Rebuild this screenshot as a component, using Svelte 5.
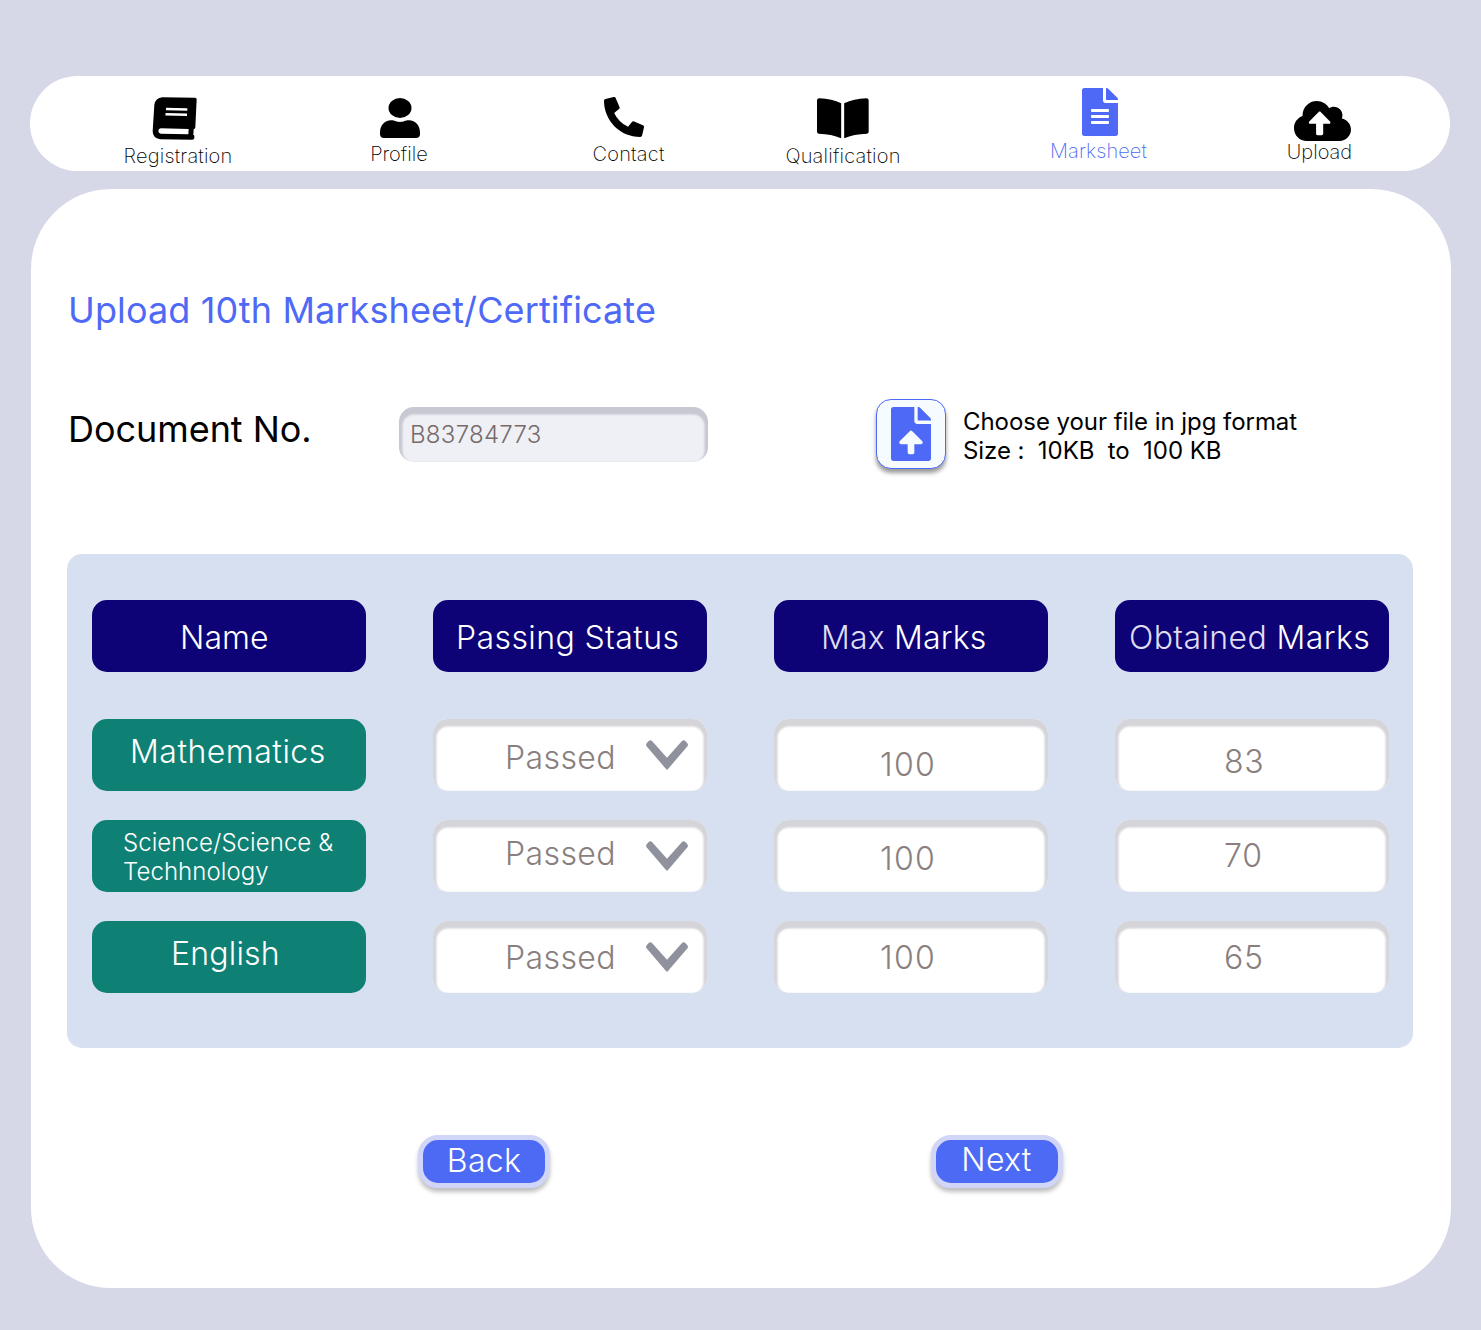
<script>
  const steps = ['Registration', 'Profile', 'Contact', 'Qualification', 'Marksheet', 'Upload'];

  const rows = [
    { key: 'maths', name: 'Mathematics', status: 'Passed', max: '100', got: '83' },
    { key: 'science', name: 'Science/Science & Techhnology', status: 'Passed', max: '100', got: '70' },
    { key: 'english', name: 'English', status: 'Passed', max: '100', got: '65' }
  ];
</script>

<div class="page">
  <nav class="steps">
    {#each steps as step}
      <div class="step {step.toLowerCase()}">
        {#if step === 'Registration'}
          <svg viewBox="395 81 135 129" width="45" height="43">
            <path fill-rule="evenodd" d="M426 81.500L524 83Q529 83 529 88L525 172Q525 176 520 178L519 194Q523 196 522 200L522 204Q521 209.500 516 209.500L419 207.500Q397 204 397 184L402 104Q405 84 426 81.500ZM437 113L501 115V122.500L437 121ZM436 129L500 130.500V138L435 136.500ZM422 175L505 177L504 193L421 191Q414 190 414 183Q414 176 422 175Z" />
          </svg>
        {:else if step === 'Profile'}
          <svg viewBox="1080 84 120 120" width="40" height="40">
            <ellipse cx="1140" cy="114" rx="34.500" ry="30" />
            <path d="M1080 188C1080 166 1094 151 1113 151C1125 151 1128 156 1140 156C1152 156 1155 151 1167 151C1186 151 1200 166 1200 188V192Q1200 204 1188 204H1092Q1080 204 1080 192Z" />
          </svg>
        {:else if step === 'Contact'}
          <svg viewBox="0 0 512 512" width="40" height="40">
            <path d="M497.390 361.800l-112-48a24 24 0 0 0-28 6.900l-49.600 60.600A370.660 370.660 0 0 1 130.600 204.110l60.600-49.600a23.940 23.940 0 0 0 6.900-28l-48-112A24.160 24.160 0 0 0 122.600.610l-104 24A24 24 0 0 0 0 48c0 256.500 207.900 464 464 464a24 24 0 0 0 23.400-18.600l24-104a24.290 24.290 0 0 0-14.010-27.600z" />
          </svg>
        {:else if step === 'Qualification'}
          <svg viewBox="771 83 156 123" width="52" height="41">
            <path d="M771 90Q771 84 778 84Q816 85 843.500 99V204Q815 191 776 190Q771 189 771 184ZM926 90Q926 84 919 84Q881 85 852.500 99V204Q881 191 921 190Q926 189 926 184Z" />
          </svg>
        {:else if step === 'Marksheet'}
          <svg viewBox="0 0 384 512" width="36" height="48">
            <path d="M224 136V0H24C10.700 0 0 10.700 0 24v464c0 13.300 10.700 24 24 24h336c13.300 0 24-10.700 24-24V160H248c-13.200 0-24-10.800-24-24zm64 236c0 6.600-5.400 12-12 12H108c-6.600 0-12-5.400-12-12v-8c0-6.600 5.400-12 12-12h168c6.600 0 12 5.400 12 12v8zm0-64c0 6.600-5.400 12-12 12H108c-6.600 0-12-5.400-12-12v-8c0-6.600 5.400-12 12-12h168c6.600 0 12 5.400 12 12v8zm0-72v8c0 6.600-5.400 12-12 12H108c-6.600 0-12-5.400-12-12v-8c0-6.600 5.400-12 12-12h168c6.600 0 12 5.400 12 12zm96-114.100v6.100H256V0h6.100c6.400 0 12.500 2.500 17 7l97.900 98c4.500 4.500 7 10.600 7 16.900z" />
          </svg>
        {:else}
          <svg viewBox="0 32 640 448" width="57" height="40">
            <path d="M537.600 226.600c4.100-10.700 6.400-22.400 6.400-34.600 0-53-43-96-96-96-19.700 0-38.100 6-53.300 16.200C367 64.200 315.300 32 256 32c-88.400 0-160 71.600-160 160 0 2.700.100 5.400.200 8.100C40.200 219.800 0 273.200 0 336c0 79.500 64.500 144 144 144h368c70.700 0 128-57.300 128-128 0-61.900-44-113.600-102.400-125.400zM393.400 288H328v112c0 8.800-7.200 16-16 16h-48c-8.800 0-16-7.200-16-16V288h-65.400c-14.300 0-21.400-17.200-11.300-27.400l105.400-105.400c6.200-6.200 16.400-6.200 22.600 0l105.400 105.400c10.100 10.200 2.900 27.400-11.300 27.400z" />
          </svg>
        {/if}
        <span>{step}</span>
      </div>
    {/each}
  </nav>

  <main class="card">
    <h1>Upload 10th Marksheet/Certificate</h1>

    <div class="document">
      <span class="label">Document No.</span>
      <div class="number">B83784773</div>
      <button class="file" aria-label="Choose file">
        <svg viewBox="0 0 384 512" width="40" height="54" preserveAspectRatio="none">
          <path d="M224 136V0H24C10.700 0 0 10.700 0 24v464c0 13.300 10.700 24 24 24h336c13.300 0 24-10.700 24-24V160H248c-13.200 0-24-10.800-24-24zm65.180 216.010H224v80c0 8.840-7.160 16-16 16h-32c-8.840 0-16-7.160-16-16v-80H94.820c-14.280 0-21.410-17.290-11.270-27.360l96.420-95.700c6.650-6.610 17.390-6.610 24.040 0l96.420 95.700c10.150 10.070 3.030 27.360-11.250 27.360zM377 105L279.100 7c-4.500-4.500-10.600-7-17-7H256v128h128v-6.100c0-6.300-2.500-12.400-7-16.900z" />
        </svg>
      </button>
      <p class="hint">Choose your file in jpg format<br />Size :&nbsp; 10KB&nbsp; to&nbsp; 100 KB</p>
    </div>

    <section class="marks">
      <div class="row head">
        <div class="cell name">Name</div>
        <div class="cell status">Passing Status</div>
        <div class="cell max"><span class="dim">Max</span> Marks</div>
        <div class="cell got"><span class="dim">Obtained</span> Marks</div>
      </div>
      {#each rows as row}
        <div class="row {row.key}">
          <div class="cell name">{row.name}</div>
          <div class="cell field status">
            <span>{row.status}</span>
            <svg class="chevron" viewBox="678 450 126 90" width="42" height="30">
              <path d="M679 468Q677 464 680 460L686 453Q691 448 696 453L741 503L786 453Q791 448 796 453L802 460Q805 464 803 468L744 537Q741 541 738 537Z" />
            </svg>
          </div>
          <div class="cell field max">{row.max}</div>
          <div class="cell field got">{row.got}</div>
        </div>
      {/each}
    </section>

    <div class="actions">
      <button class="back">Back</button>
      <button class="next">Next</button>
    </div>
  </main>
</div>

<style>
  :global(body) {
    background: #d6d8e7;
  }

  .page {
    box-sizing: border-box;
    width: 1481px;
    height: 1330px;
    padding: 76px 30px 0;
    background: #d6d8e7;
    font-family: Inter, 'Liberation Sans', sans-serif;
    color: #000;
  }

  /* step bar */
  .steps {
    box-sizing: border-box;
    display: grid;
    grid-template-columns: 220px 222px 237px 192px 319px 123px;
    width: 1420px;
    height: 95px;
    padding-left: 38px;
    border-radius: 48px;
    background: #fff;
  }

  .step {
    display: flex;
    flex-direction: column;
    align-items: center;
    font-size: 20px;
    font-weight: 200;
    line-height: 24px;
    letter-spacing: 0.2px;
  }

  .step svg {
    display: block;
    flex: none;
    fill: currentColor;
  }

  .registration { padding-top: 21px; }
  .registration svg { margin: 0 8px 4px 0; }
  .profile { padding-top: 22px; letter-spacing: 0; }
  .profile svg { margin: 0 0 4px 2px; }
  .contact { padding-top: 21px; }
  .contact svg { margin: 0 9px 5px 0; }
  .qualification { padding-top: 22px; }
  .qualification svg { margin-bottom: 5px; }
  .marksheet { padding-top: 12px; color: #4d69f5; letter-spacing: 0.1px; }
  .marksheet svg { margin: 0 0 3px 3px; }
  .upload { padding-top: 25px; letter-spacing: 0; }
  .upload svg { margin: 0 0 -1px 6px; }

  /* card */
  .card {
    box-sizing: border-box;
    width: 1420px;
    height: 1099px;
    margin: 18px 0 0 1px;
    padding: 99px 36px 0;
    border-radius: 80px;
    background: #fff;
  }

  h1 {
    margin: 0;
    padding-left: 1px;
    font-size: 36px;
    font-weight: 400;
    line-height: 44px;
    letter-spacing: 0.12px;
    color: #4d69f5;
  }

  .document {
    display: flex;
    align-items: flex-start;
    height: 88px;
    margin-top: 67px;
  }

  .label {
    width: 331px;
    padding: 8px 0 0 1px;
    box-sizing: border-box;
    font-size: 36px;
    line-height: 44px;
    letter-spacing: -0.05px;
  }

  .number {
    box-sizing: border-box;
    width: 309px;
    height: 55px;
    margin: 8px 168px 0 1px;
    padding: 13px 11px 0;
    border-radius: 15px;
    background: #eff0f5;
    box-shadow: inset 0 4px 2px 3.5px #c7c8d1;
    font-size: 24px;
    font-weight: 300;
    line-height: 29px;
    letter-spacing: 0.28px;
    color: #766a6a;
  }

  .file {
    box-sizing: border-box;
    display: flex;
    justify-content: center;
    width: 70px;
    height: 70px;
    padding: 7px 0 0;
    border: 1px solid #4d69f5;
    border-radius: 15px;
    background: #f5fbff;
    box-shadow: 0 4px 4px rgba(0, 0, 0, 0.4);
  }

  .file svg {
    fill: #4d69f5;
  }

  .hint {
    margin: 8px 0 0 17px;
    font-size: 24px;
    line-height: 29px;
    letter-spacing: -0.05px;
    white-space: nowrap;
  }

  /* marks table */
  .marks {
    box-sizing: border-box;
    width: 1346px;
    height: 494px;
    margin-top: 67px;
    padding: 46px 24px 0 25px;
    border-radius: 15px;
    background: #d7e0f1;
  }

  .row {
    display: grid;
    grid-template-columns: repeat(4, 274px);
    gap: 67px;
    margin-bottom: 29px;
  }

  .row.head {
    margin-bottom: 47px;
  }

  .cell {
    box-sizing: border-box;
    height: 72px;
    border-radius: 15px;
    font-size: 32px;
    font-weight: 300;
    line-height: 39px;
    letter-spacing: 0.4px;
    color: #fff;
    white-space: nowrap;
  }

  .cell.name { background: #0f8174; }
  .head .cell { padding-top: 18px; background: #0d0377; }
  .head .name { padding-left: 88px; letter-spacing: 0.1px; }
  .head .status { padding-left: 23px; }
  .head .max { padding-left: 47px; letter-spacing: 0.15px; }
  .head .got { padding-left: 14px; }
  .dim { color: #dfddef; }

  .cell.field {
    background: #fff;
    box-shadow: inset 0 4px 2px 3.5px #d5d4d9;
    color: #8a7f7f;
  }

  .field.status {
    display: flex;
    align-items: flex-start;
    justify-content: space-between;
    padding: 0 19px 0 72px;
  }

  .field.max { padding-left: 106px; letter-spacing: 1.3px; }
  .field.got { padding-left: 109px; letter-spacing: 0.8px; }

  .chevron {
    margin-top: 21px;
    fill: #8f929c;
  }

  .maths .name { padding: 13px 0 0 38px; letter-spacing: 0.5px; }
  .maths .status span { margin-top: 19px; }
  .maths .max { padding-top: 26px; }
  .maths .got { padding-top: 23px; }

  .science .name {
    padding: 8px 30px 0 31px;
    font-size: 24px;
    line-height: 29px;
    letter-spacing: 0.06px;
    white-space: normal;
  }
  .science .status span { margin-top: 14px; }
  .science .max { padding-top: 19px; }
  .science .got { padding-top: 16px; }

  .english .name { padding: 13px 0 0 79px; letter-spacing: 0.2px; }
  .english .status span { margin-top: 17px; }
  .english .max { padding-top: 17px; }
  .english .got { padding-top: 17px; }

  /* navigation buttons */
  .actions {
    display: flex;
    gap: 381px;
    margin: 87px 0 0 351px;
  }

  .actions button {
    box-sizing: border-box;
    width: 132px;
    height: 53px;
    padding: 0 0 2px;
    border: 5px solid #d1d6f9;
    border-radius: 20px;
    background: #4d6af5;
    box-shadow: 0 4px 4px rgba(0, 0, 0, 0.25);
    font: 300 32px/39px Inter, 'Liberation Sans', sans-serif;
    letter-spacing: 0.3px;
    color: #fff;
  }

  .actions .next {
    padding: 0 1px 4px 0;
  }
</style>
